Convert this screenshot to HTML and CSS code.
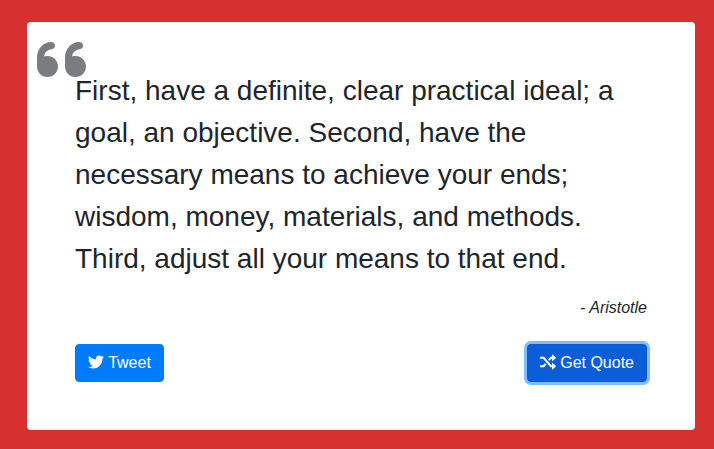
FILE: index.html
```html
<!DOCTYPE html>
<html lang="en">
<head>
<meta charset="utf-8">
<meta name="viewport" content="width=device-width, initial-scale=1">
<title>Random Quote</title>
<link rel="stylesheet" href="styles.css">
</head>
<body>
<main class="quote-box">
  <svg class="quote-mark" viewBox="0 0 49 35" aria-hidden="true">
    <path id="mark" d="M0 24.500V16C0 6.500 6.500 0 14 0C16.600 0 18 1.600 18 3.600C18 5.700 16.800 7.100 14.800 7.300C10.500 7.800 7.400 10.500 7.200 14.500C8.300 14.100 9.400 14 10.500 14C16.500 14 21 18.700 21 24.500S16.500 35 10.500 35S0 30.300 0 24.500Z"/>
    <use href="#mark" x="28"/>
  </svg>
  <blockquote class="quote">
    <p class="quote-text">First, have a definite, clear practical ideal; a goal, an objective. Second, have the necessary means to achieve your ends; wisdom, money, materials, and methods. Third, adjust all your means to that end.</p>
    <footer class="author">- <cite>Aristotle</cite></footer>
  </blockquote>
  <div class="actions">
    <a class="btn" href="#tweet"><svg class="icon" viewBox="0 0 512 512" aria-hidden="true"><path d="M459.37 151.716c.325 4.548.325 9.097.325 13.645 0 138.72-105.583 298.558-298.558 298.558-59.452 0-114.680-17.219-161.137-47.106 8.447.974 16.568 1.299 25.340 1.299 49.055 0 94.213-16.568 130.274-44.832-46.132-.975-84.792-31.188-98.112-72.772 6.498.974 12.995 1.624 19.818 1.624 9.421 0 18.843-1.300 27.614-3.573-48.081-9.747-84.143-51.980-84.143-102.985v-1.299c13.969 7.797 30.214 12.670 47.431 13.319-28.264-18.843-46.781-51.005-46.781-87.391 0-19.492 5.197-37.360 14.294-52.954 51.655 63.675 129.300 105.258 216.365 109.807-1.624-7.797-2.599-15.918-2.599-24.040 0-57.828 46.782-104.934 104.934-104.934 30.213 0 57.502 12.670 76.670 33.137 23.715-4.548 46.456-13.320 66.599-25.340-7.798 24.366-24.366 44.833-46.132 57.827 21.117-2.273 41.584-8.122 60.426-16.243-14.292 20.791-32.161 39.308-52.628 54.253z"/></svg> Tweet</a>
    <button class="btn btn-active" type="button"><svg class="icon" viewBox="0 0 16 16" aria-hidden="true"><path class="icon-line" d="M0 3.800H3.600L11 12.200H13M0 12.200H3.600L5.700 9.800M8.900 6.200L11 3.800H13"/><path d="M12 .8Q12 .2 12.500 .6L15.800 3.400Q16.200 3.800 15.800 4.200L12.500 7Q12 7.400 12 6.800ZM12 9.200Q12 8.600 12.500 9L15.800 11.800Q16.200 12.200 15.800 12.600L12.500 15.400Q12 15.800 12 15.200Z"/></svg> Get Quote</button>
  </div>
</main>
</body>
</html>
```
FILE: styles.css
```css
*,
*::before,
*::after {
  box-sizing: border-box;
}

body {
  margin: 0;
  min-height: 100vh;
  padding: 22px 19px 19px 27px;
  background: #d63031;
  color: #212529;
  font-family: "Liberation Sans", Arial, sans-serif;
  font-size: 16px;
  line-height: 24px;
}

.quote-box {
  position: relative;
  padding: 48px;
  background: #fff;
  border-radius: 4px;
}

.quote-mark {
  position: absolute;
  top: 20px;
  left: 10px;
  width: 49px;
  height: 35px;
  fill: #7b7c80;
}

.quote {
  position: relative;
  margin: 0 0 24px;
}

.quote-text {
  margin: 0 0 16px;
  font-size: 28px;
  line-height: 42px;
}

.author {
  font-style: italic;
  text-align: right;
}

.actions {
  display: flex;
  justify-content: space-between;
}

.btn {
  padding: 6px 12px;
  border: 1px solid #007bff;
  border-radius: 4px;
  background: #007bff;
  color: #fff;
  font: inherit;
  text-decoration: none;
  cursor: pointer;
}

.btn-active {
  border-color: #0a5bd3;
  background: #0b5ed7;
  box-shadow: 0 0 0 3px #80bdff;
}

.icon {
  width: 16px;
  height: 16px;
  vertical-align: -2px;
  fill: currentColor;
}

.icon-line {
  fill: none;
  stroke: currentColor;
  stroke-width: 2px;
}
```
